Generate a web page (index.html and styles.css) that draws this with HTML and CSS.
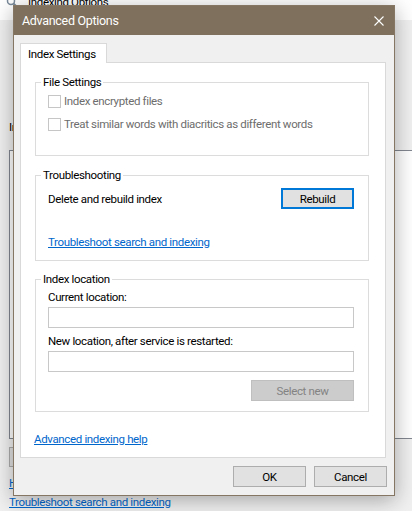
FILE: index.html
```html
<!DOCTYPE html>
<html lang="en">
<head>
<meta charset="utf-8">
<title>Advanced Options</title>
<link rel="stylesheet" href="styles.css">
</head>
<body>
<div class="desktop">
  <div class="bgwin">
    <div class="bg-title">
      <svg class="bg-icon" width="12" height="12" viewBox="0 0 12 12"><circle cx="5" cy="5" r="3.5" fill="none" stroke="#7a8a9a" stroke-width="1.5"/><path d="M7.5 7.5 L11 11" stroke="#7a8a9a" stroke-width="1.8"/></svg>
      <span>Indexing Options</span>
    </div>
    <div class="bg-body">
      <div class="bg-label">Index these locations:</div>
      <div class="bg-list"></div>
      <div class="bg-buttons"><span class="bg-btn">Modify</span></div>
      <a class="bg-link first" href="#">How does indexing affect searches?</a>
      <a class="bg-link" href="#">Troubleshoot search and indexing</a>
    </div>
  </div>

  <div class="dialog">
    <div class="titlebar">
      <span class="title">Advanced Options</span>
      <span class="close"><svg width="10" height="10" viewBox="0 0 10 10"><path d="M0.5 0.5 L9.5 9.5 M9.5 0.5 L0.5 9.5" stroke="#fff" stroke-width="1.1"/></svg></span>
    </div>
    <div class="dlg-body">
      <div class="tabs"><span class="tab">Index Settings</span></div>
      <div class="panel">
        <fieldset class="group g1">
          <legend>File Settings</legend>
          <div class="check-row"><span class="check"></span><span class="disabled">Index encrypted files</span></div>
          <div class="check-row second"><span class="check"></span><span class="disabled">Treat similar words with diacritics as different words</span></div>
        </fieldset>
        <fieldset class="group g2">
          <legend>Troubleshooting</legend>
          <div class="rebuild-row"><span>Delete and rebuild index</span><span class="btn focus">Rebuild</span></div>
          <a class="link ts-link" href="#">Troubleshoot search and indexing</a>
        </fieldset>
        <fieldset class="group g3">
          <legend>Index location</legend>
          <div class="label">Current location:</div>
          <div class="textbox"></div>
          <div class="label second">New location, after service is restarted:</div>
          <div class="textbox"></div>
          <div class="select-row"><span class="btn disabled-btn">Select new</span></div>
        </fieldset>
        <a class="link help-link" href="#">Advanced indexing help</a>
      </div>
      <div class="footer">
        <span class="btn">OK</span>
        <span class="btn">Cancel</span>
      </div>
    </div>
  </div>
</div>
</body>
</html>
```
FILE: styles.css
```css
html, body {
  margin: 0;
  padding: 0;
}
body {
  width: 412px;
  height: 511px;
  overflow: hidden;
  background: #f0f0f0;
  font-family: Roboto, "Liberation Sans", sans-serif;
  font-size: 11.5px;
  letter-spacing: -0.35px;
  color: #000;
}
.desktop {
  position: relative;
  width: 412px;
  height: 511px;
  overflow: hidden;
}

/* background window */
.bgwin {
  margin-top: -16px;
}
.bg-title {
  height: 36px;
  background: #fff;
  display: flex;
  align-items: center;
  gap: 10px;
  padding-left: 6px;
}
.bg-body {
  padding-left: 9px;
  display: flex;
  flex-direction: column;
  align-items: flex-start;
}
.bg-label {
  margin-top: 100px;
  line-height: 15px;
}
.bg-list {
  margin-top: 15px;
  width: 420px;
  height: 287px;
  border: 1px solid #828790;
  background: #fff;
}
.bg-buttons {
  margin-top: 8px;
  display: flex;
}
.bg-btn {
  width: 78px;
  height: 18px;
  border: 1px solid #adadad;
  background: #e1e1e1;
  display: flex;
  align-items: center;
  justify-content: center;
}
.bg-link {
  color: #0066cc;
  line-height: 15px;
  margin-top: 4px;
}
.bg-link.first {
  margin-top: 9px;
}

/* dialog */
.dialog {
  position: absolute;
  left: 13px;
  top: 5px;
  width: 382px;
  box-sizing: border-box;
  border: 1px solid #847662;
  background: #f0f0f0;
  box-shadow: 0 4px 20px rgba(0, 0, 0, 0.32);
}
.titlebar {
  height: 29px;
  background: #7e705c;
  display: flex;
  align-items: center;
  justify-content: space-between;
  padding-left: 8px;
  color: #fff;
}
.title {
  font-size: 12.5px;
  letter-spacing: -0.3px;
}
.close {
  width: 30px;
  height: 29px;
  display: flex;
  align-items: center;
  justify-content: center;
}
.dlg-body {
  padding: 8px 8px 8px 6px;
}
.tabs {
  display: flex;
  position: relative;
  z-index: 1;
  margin-bottom: -1px;
}
.tab {
  height: 19px;
  border: 1px solid #d9d9d9;
  border-bottom: none;
  background: #fff;
  padding-left: 7px;
  box-sizing: content-box;
  display: flex;
  align-items: center;
  width: 78px;
}
.panel {
  border: 1px solid #d9d9d9;
  background: #fff;
  padding: 12px 16px 10px 14px;
  display: flex;
  flex-direction: column;
  align-items: stretch;
}
.group {
  margin: 0;
  border: 1px solid #dcdcdc;
  padding: 0 14px 0 12px;
  min-width: 0;
}
.group legend {
  padding: 0 2px;
  margin-left: -7px;
  line-height: 15px;
}
.g1 {
  padding-top: 3px;
  padding-bottom: 23px;
}
.g2 {
  margin-top: 12px;
  padding-top: 5px;
  padding-bottom: 10px;
}
.g3 {
  margin-top: 11px;
  padding-top: 3px;
  padding-bottom: 10px;
}
.check-row {
  display: flex;
  align-items: center;
  height: 16px;
  gap: 2px;
}
.check-row.second {
  margin-top: 7px;
}
.check {
  width: 11px;
  height: 11px;
  border: 1px solid #c6c6c6;
  background: #fff;
}
.disabled {
  color: #6d6d6d;
  margin-left: 1px;
}
.rebuild-row {
  display: flex;
  align-items: center;
  justify-content: space-between;
}
.btn {
  width: 71px;
  height: 19px;
  border: 1px solid #adadad;
  background: #e1e1e1;
  display: flex;
  align-items: center;
  justify-content: center;
  box-sizing: content-box;
}
.btn.focus {
  width: 69px;
  height: 17px;
  border: 2px solid #0078d7;
}
.link {
  color: #0066cc;
  line-height: 15px;
  align-self: flex-start;
}
.ts-link {
  display: inline-block;
  margin-top: 26px;
}
.label {
  line-height: 15px;
}
.label.second {
  margin-top: 6px;
}
.textbox {
  margin-top: 2px;
  height: 19px;
  border: 1px solid #c8c8c8;
  background: #fff;
}
.select-row {
  margin-top: 8px;
  display: flex;
  justify-content: flex-end;
}
.disabled-btn {
  width: 101px;
  background: #cccccc;
  border-color: #bfbfbf;
  color: #838383;
}
.help-link {
  margin-top: 20px;
  margin-left: -1px;
}
.footer {
  margin-top: 8px;
  margin-right: -1px;
  display: flex;
  justify-content: flex-end;
  gap: 8px;
}
```
